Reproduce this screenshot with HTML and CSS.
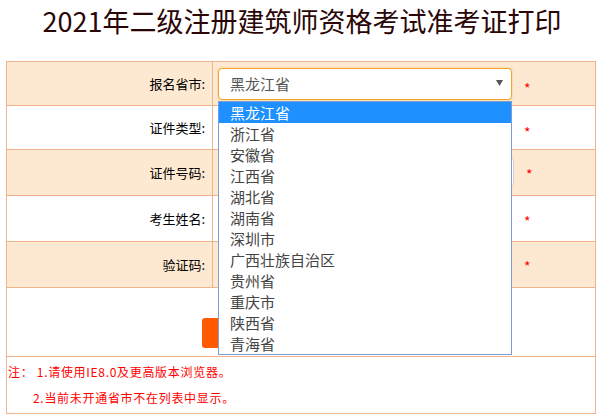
FILE: index.html
```html
<!DOCTYPE html>
<html lang="zh-CN">
<head>
<meta charset="utf-8">
<title>2021年二级注册建筑师资格考试准考证打印</title>
<link rel="stylesheet" href="styles.css">
</head>
<body>
<div class="page">
  <h1 class="title">2021年二级注册建筑师资格考试准考证打印</h1>
  <div class="form">
    <div class="row shaded">
      <div class="label">报名省市:</div>
      <div class="field">
        <div class="select-wrap">
          <div class="select is-focused">
            <span class="select-text">黑龙江省</span>
            <svg class="arrow" width="7" height="6" viewBox="0 0 7 6"><polygon points="0,0 7,0 3.5,6" fill="#555"/></svg>
          </div>
          <ul class="dropdown">
            <li class="option is-active">黑龙江省</li>
            <li class="option">浙江省</li>
            <li class="option">安徽省</li>
            <li class="option">江西省</li>
            <li class="option">湖北省</li>
            <li class="option">湖南省</li>
            <li class="option">深圳市</li>
            <li class="option">广西壮族自治区</li>
            <li class="option">贵州省</li>
            <li class="option">重庆市</li>
            <li class="option">陕西省</li>
            <li class="option">青海省</li>
          </ul>
        </div>
        <span class="req req-select">*</span>
      </div>
    </div>
    <div class="row">
      <div class="label">证件类型:</div>
      <div class="field">
        <div class="select"></div>
        <span class="req req-select">*</span>
      </div>
    </div>
    <div class="row shaded tall">
      <div class="label">证件号码:</div>
      <div class="field">
        <div class="input input-wide"></div>
        <span class="req req-input">*</span>
      </div>
    </div>
    <div class="row tall">
      <div class="label">考生姓名:</div>
      <div class="field">
        <div class="input"></div>
        <span class="req req-name">*</span>
      </div>
    </div>
    <div class="row shaded tall">
      <div class="label">验证码:</div>
      <div class="field">
        <div class="input"></div>
        <span class="req req-code">*</span>
      </div>
    </div>
    <div class="row action">
      <button class="btn" type="button" aria-label="打印准考证"></button>
    </div>
    <div class="row notes">
      <p class="note">注：&nbsp;1.请使用IE8.0及更高版本浏览器。</p>
      <p class="note note-indent">2.当前未开通省市不在列表中显示。</p>
    </div>
  </div>
</div>
</body>
</html>
```

FILE: styles.css
```css
* { box-sizing: border-box; }

html, body {
  margin: 0;
  padding: 0;
  background: #fff;
}

body {
  font-family: "Noto Sans CJK SC", "Noto Sans", sans-serif;
  color: #000;
}

.page {
  width: 604px;
}

.title {
  margin: 0;
  height: 61px;
  padding-top: 4px;
  font-size: 27px;
  font-weight: normal;
  line-height: 34px;
  text-align: center;
  color: #2a0606;
}

.form {
  width: 590px;
  margin-left: 6px;
  border: 1px solid #efb48b;
}

.row {
  display: flex;
  height: 44px;
  border-bottom: 1px solid #efb48b;
}

.row.tall { height: 46px; }

.row.shaded { background: #fde9d1; }

.label {
  width: 206px;
  flex: none;
  border-right: 1px solid #efb48b;
  display: flex;
  align-items: center;
  justify-content: flex-end;
  padding-right: 7px;
  font-size: 13px;
  color: #000;
}

.field {
  flex: 1;
  display: flex;
  align-items: center;
  padding-left: 5px;
}

.select-wrap {
  position: relative;
  width: 294px;
  height: 32px;
}

.select {
  width: 294px;
  height: 32px;
  border: 1px solid #cfcfcf;
  border-radius: 4px;
  background: #fff;
  display: flex;
  align-items: center;
  justify-content: space-between;
  padding: 0 8px 0 11px;
}

.select.is-focused {
  border-color: #f5a52c;
  box-shadow: 0 0 2px rgba(245, 165, 44, 0.6);
}

.select-text {
  font-size: 15px;
  color: #555;
}

.arrow {
  display: block;
  margin-top: -2px;
}

.dropdown {
  position: absolute;
  left: 0;
  top: 33px;
  width: 294px;
  margin: 0;
  padding: 0;
  list-style: none;
  background: #fff;
  border: 1px solid #7c9dd6;
  z-index: 10;
}

.option {
  height: 21px;
  line-height: 21px;
  padding-left: 11px;
  font-size: 15px;
  color: #444;
}

.option.is-active {
  background: #1e90ff;
  color: #fff;
}

.input {
  width: 294px;
  height: 32px;
  border: 1px solid #d4d4d4;
  border-radius: 4px;
  background: #fff;
}

.input-wide { width: 296px; height: 31px; }

.req {
  color: #f00;
  font-size: 14px;
  line-height: 14px;
  margin-left: 12px;
}

.req-select { padding-top: 9px; }
.req-input { padding-top: 3px; }
.req-name { padding-top: 5px; }
.req-code { padding-top: 3px; }

.row.action {
  height: 69px;
  justify-content: center;
  padding-top: 30px;
}

.btn {
  width: 198px;
  height: 30px;
  border: 0;
  border-radius: 3px;
  background: #ff5a00;
  padding: 0;
}

.row.notes {
  height: auto;
  display: block;
  border-bottom: 0;
  padding: 2px 0 2px 1px;
}

.note {
  margin: 0;
  font-size: 12px;
  line-height: 26px;
  letter-spacing: 0.7px;
  color: #f00;
}

.note-indent { padding-left: 25px; }
```
